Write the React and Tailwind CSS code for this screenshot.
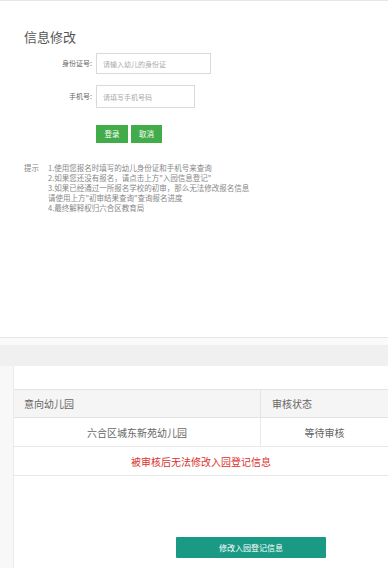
import React from 'react';

const tips = [
  '1.使用您报名时填写的幼儿身份证和手机号来查询',
  '2.如果您还没有报名，请点击上方"入园信息登记"',
  '3.如果已经通过一所报名学校的初审，那么无法修改报名信息',
  '请使用上方"初审结果查询"查询报名进度',
  '4.最终解释权归六合区教育局',
];

function App() {
  const font = { fontFamily: '"Noto Sans CJK SC", "Liberation Sans", sans-serif' };

  return (
    <div className="w-[388px] h-[568px] overflow-hidden bg-white" style={font}>
      <div className="border-t border-[#e6e6e6]">
        <div className="pl-[24px] pt-[28px]">
          <h1 className="text-[13px] leading-[16px] text-[#555] font-normal">信息修改</h1>

          <div className="mt-[8px] flex items-center">
            <label className="w-[72px] text-right pr-[4px] text-[7px] text-[#666]">身份证号:</label>
            <input
              className="w-[115px] h-[21px] border border-[#d9d9d9] px-[6px] text-[7px] outline-none placeholder:text-[#aaa]"
              placeholder="请输入幼儿的身份证"
            />
          </div>

          <div className="mt-[11px] flex items-center">
            <label className="w-[72px] text-right pr-[4px] text-[7px] text-[#666]">手机号:</label>
            <input
              className="w-[99px] h-[23px] border border-[#d9d9d9] px-[6px] text-[7px] outline-none placeholder:text-[#aaa]"
              placeholder="请填写手机号码"
            />
          </div>

          <div className="mt-[17px] ml-[72px] flex gap-[3px]">
            <button className="w-[32px] h-[18px] bg-[#43ac4a] text-white text-[7.5px] leading-[18px]">登录</button>
            <button className="w-[31px] h-[18px] bg-[#43ac4a] text-white text-[7.5px] leading-[18px]">取消</button>
          </div>

          <div className="mt-[20px] flex text-[7.5px] leading-[10px] text-[#888]">
            <span className="w-[24px]">提示</span>
            <div className="flex flex-col">
              {tips.map((t, i) => (
                <p key={i} className="whitespace-nowrap">{t}</p>
              ))}
            </div>
          </div>
        </div>
      </div>

      <div className="mt-[124px] border-t border-[#e6e6e6]">
        <div className="h-[7px] bg-[#fafafa]"></div>
        <div className="h-[21px] bg-[#f0f0f0]"></div>
      </div>

      <div className="flex h-[203px]">
        <div className="w-[14px] bg-[#f8f8f8] border-r border-[#ebebeb]"></div>
        <div className="flex-1 pt-[23px]">
          <div className="text-[10px] text-[#666]">
            <div className="flex h-[29px] bg-[#f5f5f5] border-t border-b border-[#e3e3e3] items-center">
              <div className="w-[247px] h-full flex items-center pl-[10px] border-r border-[#e3e3e3]">意向幼儿园</div>
              <div className="flex-1 pl-[11px]">审核状态</div>
            </div>
            <div className="flex h-[29px] border-b border-[#e8e8e8] items-center">
              <div className="w-[247px] h-full flex items-center justify-center border-r border-[#e8e8e8]">六合区城东新苑幼儿园</div>
              <div className="flex-1 text-center">等待审核</div>
            </div>
            <div className="h-[29px] border-b border-[#e8e8e8] flex items-center justify-center text-[#d9332e]">
              被审核后无法修改入园登记信息
            </div>
          </div>

          <button className="mt-[61px] ml-[162px] w-[150px] h-[21px] bg-[#1a9a85] text-white text-[8px] rounded-[1px]">
            修改入园登记信息
          </button>
        </div>
      </div>
    </div>
  );
}

export default App;
